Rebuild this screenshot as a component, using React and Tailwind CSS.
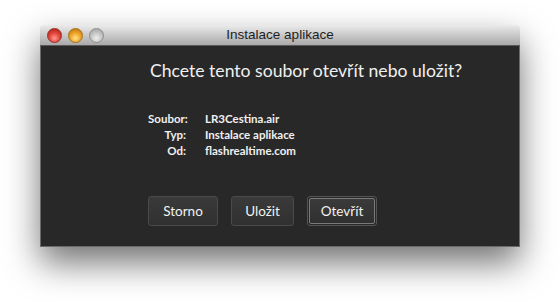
// Instalace aplikace - AIR install dialog
export default function App() {
  const rows = [
    ['Soubor:', 'LR3Cestina.air'],
    ['Typ:', 'Instalace aplikace'],
    ['Od:', 'flashrealtime.com'],
  ];

  return (
    <div className="w-[560px] h-[302px] bg-white overflow-hidden pt-[25px] pl-[40px]">
      <div className="w-[480px] shadow-[0_16px_34px_rgba(0,0,0,0.55)] rounded-t-[4px]">
        {/* Title bar */}
        <div className="relative h-[21px] rounded-t-[4px] bg-gradient-to-b from-[#ebebeb] to-[#a9a9a9] border-b border-[#5a5a5a] flex items-center pl-[7px] gap-[6px]">
          <span className="w-[15px] h-[15px] rounded-full bg-[radial-gradient(circle_at_50%_70%,#ff9a8f_0%,#e5473c_45%,#a31a12_100%)] border border-[#9a2a22]" />
          <span className="w-[15px] h-[15px] rounded-full bg-[radial-gradient(circle_at_50%_70%,#ffe68a_0%,#f0a52a_45%,#b06a0a_100%)] border border-[#a5701e]" />
          <span className="w-[15px] h-[15px] rounded-full bg-[radial-gradient(circle_at_50%_70%,#eeeeee_0%,#c4c4c4_50%,#9a9a9a_100%)] border border-[#8e8e8e]" />
          <span className="absolute inset-0 flex items-center justify-center text-[13.5px] text-[#1e1e1e] font-['Liberation_Sans',sans-serif] pointer-events-none">
            Instalace aplikace
          </span>
        </div>

        {/* Body */}
        <div className="h-[201px] bg-[#282828] border-x border-b border-[#6a6a6a] pl-[107px] pt-[13px] font-['Lato',sans-serif] text-[#f0f0f0]">
          <h1 className="pl-[2px] text-[17.6px] leading-[24px] font-normal">
            Chcete tento soubor otevřít nebo uložit?
          </h1>

          <div className="mt-[28px] flex flex-col text-[11.5px] font-bold leading-[16px]">
            {rows.map(([label, value]) => (
              <div key={label} className="flex">
                <span className="w-[38px] text-right whitespace-nowrap">{label}</span>
                <span className="ml-[19px]">{value}</span>
              </div>
            ))}
          </div>

          <div className="mt-[37px] flex gap-[13px] text-[13.5px]">
            <button className="w-[70px] h-[30px] rounded-[3px] bg-gradient-to-b from-[#3a3a3a] to-[#303030] border border-[#4a4a4a] text-[#f2f2f2]">
              Storno
            </button>
            <button className="w-[63px] h-[30px] rounded-[3px] bg-gradient-to-b from-[#3a3a3a] to-[#303030] border border-[#4a4a4a] text-[#f2f2f2]">
              Uložit
            </button>
            <button className="w-[70px] h-[30px] rounded-[3px] border border-[#555] p-[1px]">
              <span className="flex w-full h-full items-center justify-center rounded-[2px] bg-gradient-to-b from-[#3a3a3a] to-[#303030] border border-[#7a7a7a] text-[#f2f2f2]">
                Otevřít
              </span>
            </button>
          </div>
        </div>
      </div>
    </div>
  );
}
